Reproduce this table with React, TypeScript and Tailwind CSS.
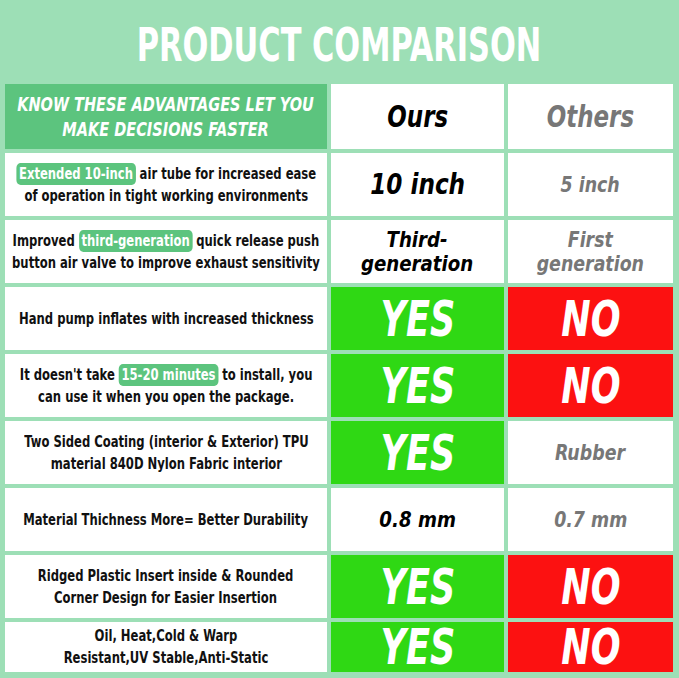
import React from "react";

const cond = "font-['DejaVu_Sans_Condensed','Liberation_Sans_Narrow','Liberation_Sans',sans-serif] [font-stretch:condensed]";

type Cell = { kind: "text" | "yes" | "no"; text?: string; big?: boolean; gray?: boolean };

interface Row {
  desc: React.ReactNode;
  ours: Cell;
  others: Cell;
}

function Pill({ children }: { children: React.ReactNode }) {
  return (
    <span className="bg-[#5cc47e] text-white rounded-[5px] px-[3px] py-[2px]">{children}</span>
  );
}

const rows: Row[] = [
  {
    desc: (
      <>
        <Pill>Extended 10-inch</Pill> air tube for increased ease
        <br />
        of operation in tight working environments
      </>
    ),
    ours: { kind: "text", text: "10 inch", big: true },
    others: { kind: "text", text: "5 inch", gray: true },
  },
  {
    desc: (
      <>
        Improved <Pill>third-generation</Pill> quick release push
        <br />
        button air valve to improve exhaust sensitivity
      </>
    ),
    ours: { kind: "text", text: "Third-\ngeneration" },
    others: { kind: "text", text: "First\ngeneration", gray: true },
  },
  {
    desc: <>Hand pump inflates with increased thickness</>,
    ours: { kind: "yes" },
    others: { kind: "no" },
  },
  {
    desc: (
      <>
        It doesn't take <Pill>15-20 minutes</Pill> to install, you
        <br />
        can use it when you open the package.
      </>
    ),
    ours: { kind: "yes" },
    others: { kind: "no" },
  },
  {
    desc: (
      <>
        Two Sided Coating (interior &amp; Exterior) TPU
        <br />
        material 840D Nylon Fabric interior
      </>
    ),
    ours: { kind: "yes" },
    others: { kind: "text", text: "Rubber", gray: true },
  },
  {
    desc: <>Material Thichness More= Better Durability</>,
    ours: { kind: "text", text: "0.8 mm" },
    others: { kind: "text", text: "0.7 mm", gray: true },
  },
  {
    desc: (
      <>
        Ridged Plastic Insert inside &amp; Rounded
        <br />
        Corner Design for Easier Insertion
      </>
    ),
    ours: { kind: "yes" },
    others: { kind: "no" },
  },
  {
    desc: (
      <>
        Oil, Heat,Cold &amp; Warp
        <br />
        Resistant,UV Stable,Anti-Static
      </>
    ),
    ours: { kind: "yes" },
    others: { kind: "no" },
  },
];

function ValueCell({ cell }: { cell: Cell }) {
  if (cell.kind === "yes" || cell.kind === "no") {
    return (
      <div className={`flex items-center justify-center ${cell.kind === "yes" ? "bg-[#2fd814]" : "bg-[#fc1111]"}`}>
        <span className={`${cond} text-white font-bold italic text-[50px] leading-none scale-x-[0.78] inline-block`}>
          {cell.kind === "yes" ? "YES" : "NO"}
        </span>
      </div>
    );
  }
  const lines = (cell.text || "").split("\n");
  return (
    <div className="bg-white flex items-center justify-center">
      <div
        className={`${cond} font-bold italic text-center leading-[24px] scale-x-[0.92] ${
          cell.gray ? "text-[#777777] text-[21px]" : cell.big ? "text-black text-[28px]" : "text-black text-[22px]"
        }`}
      >
        {lines.map((l, i) => (
          <div key={i}>{l}</div>
        ))}
      </div>
    </div>
  );
}

export default function App() {
  return (
    <div className="w-[679px] h-[678px] bg-[#9ddfb6] flex flex-col overflow-hidden">
      <div className="h-[85px] flex items-center justify-center pt-[4px]">
        <h1 className={`${cond} text-white font-bold text-[47px] leading-none whitespace-nowrap scale-x-[0.72] inline-block`}>
          PRODUCT COMPARISON
        </h1>
      </div>
      <div className="flex-1 grid grid-cols-[322px_173px_165px] grid-rows-[65px_repeat(7,63px)_1fr] gap-[4px] pl-[5px] pb-[6px]">
        <div className="bg-[#5cc47e] flex items-center justify-center overflow-hidden">
          <div className={`${cond} text-white font-bold italic text-[19px] leading-[25px] text-center whitespace-nowrap scale-x-[0.85] shrink-0`}>
            KNOW THESE ADVANTAGES LET YOU
            <br />
            MAKE DECISIONS FASTER
          </div>
        </div>
        <div className="bg-white flex items-center justify-center">
          <span className={`${cond} text-black font-bold italic text-[30px] scale-x-[0.85] inline-block`}>Ours</span>
        </div>
        <div className="bg-white flex items-center justify-center">
          <span className={`${cond} text-[#777777] font-bold italic text-[30px] scale-x-[0.85] inline-block`}>Others</span>
        </div>
        {rows.map((r, i) => (
          <React.Fragment key={i}>
            <div className="bg-white flex items-center justify-center overflow-hidden">
              <div className={`${cond} text-[#111] font-bold text-[15px] leading-[22px] text-center whitespace-nowrap scale-x-[0.86] shrink-0`}>
                {r.desc}
              </div>
            </div>
            <ValueCell cell={r.ours} />
            <ValueCell cell={r.others} />
          </React.Fragment>
        ))}
      </div>
    </div>
  );
}
